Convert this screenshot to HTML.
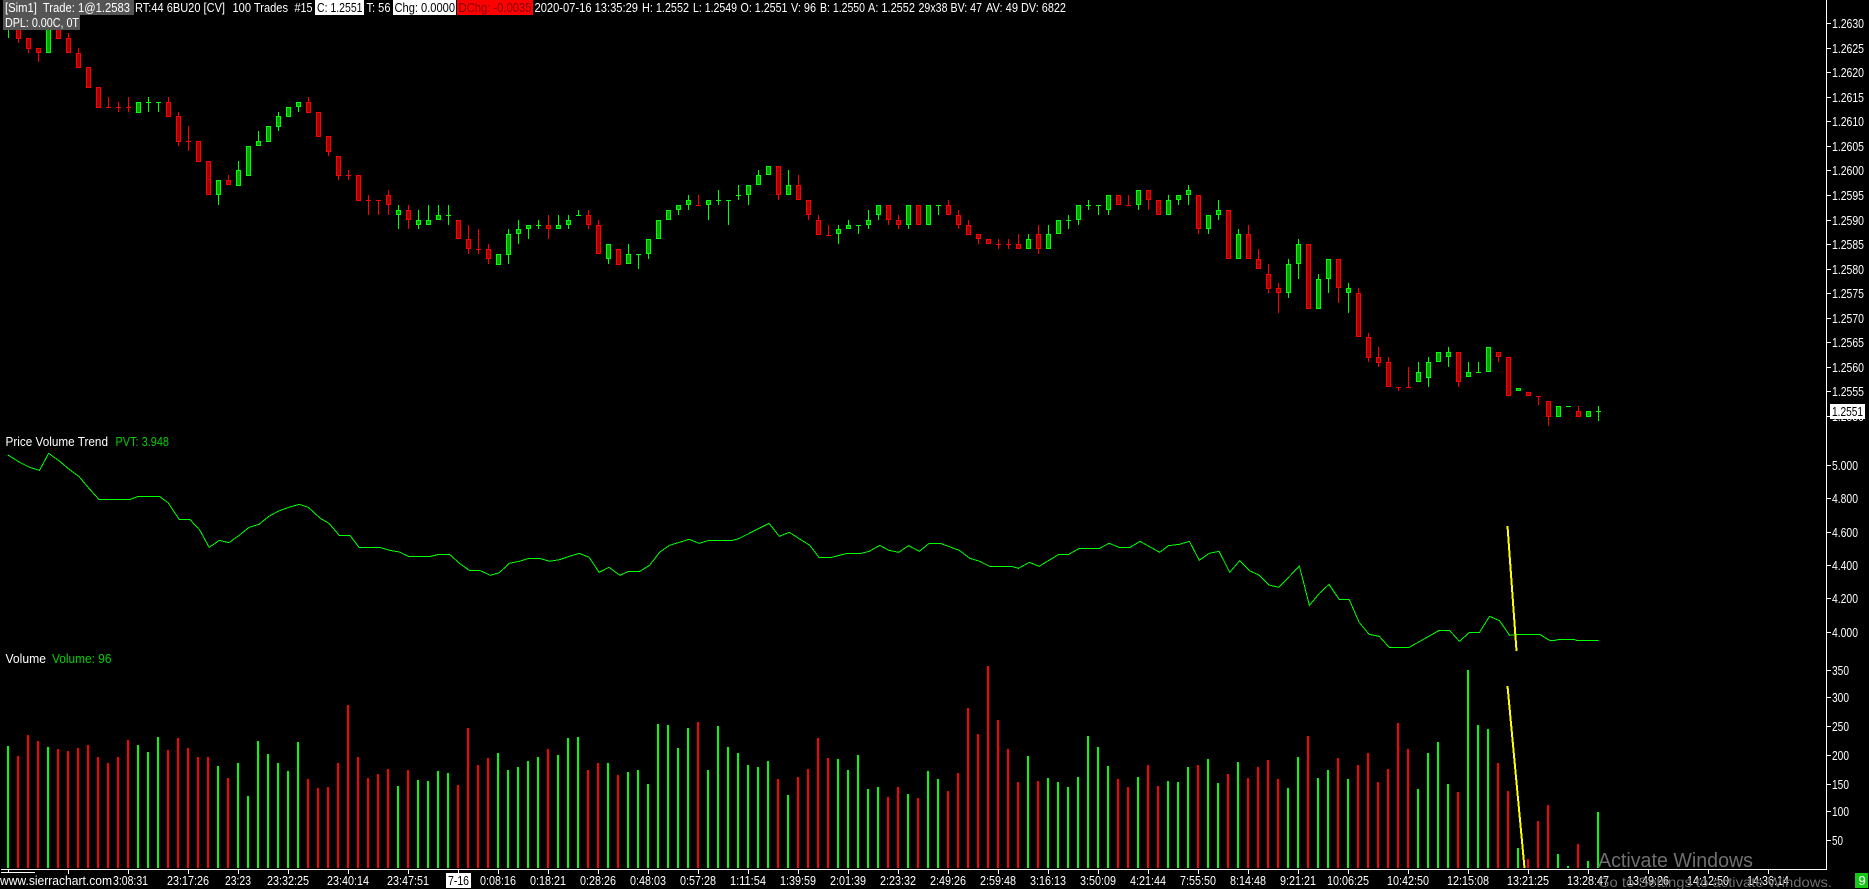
<!DOCTYPE html>
<html><head><meta charset="utf-8"><title>Sierra Chart</title>
<style>
html,body{margin:0;padding:0;background:#000;width:1869px;height:889px;overflow:hidden}
svg{display:block;position:absolute;left:0;top:0}
text{font-family:"Liberation Sans",sans-serif;font-size:13px;fill:#fff}
.g{fill:#00d000}
.b{fill:#000}
</style></head><body>
<svg width="1869" height="889" viewBox="0 0 1869 889" xmlns="http://www.w3.org/2000/svg">
<rect width="1869" height="889" fill="#000"/>

<g shape-rendering="crispEdges" fill="none">
<!-- red wicks & dojis -->
<path stroke="#f00" d="M18.5 28V43M28.5 38V53M38.5 48V62M68.5 33V38M78.5 48V53M108.5 97V108M106 107.5h5M118.5 102V112M116 107.5h5M128.5 97V112M126 107.5h5M168.5 97V102M178.5 112V146M188.5 126V151M186 141.5h5M228.5 175V180M308.5 97V102M328.5 152V156M338.5 176V180M348.5 170V180M346 175.5h5M368.5 195V215M366 200.5h5M378.5 200V215M376 200.5h5M388.5 190V215M408.5 205V229M468.5 225V254M478.5 229V254M476 249.5h5M488.5 244V264M548.5 215V239M588.5 210V229M598.5 220V225M698.5 195V205M696 205.5h5M778.5 195V200M798.5 175V185M808.5 215V220M818.5 215V220M828.5 225V235M826 235.5h5M888.5 220V225M898.5 215V229M948.5 200V205M958.5 210V229M968.5 220V225M978.5 239V244M998.5 239V249M996 244.5h5M1008.5 239V249M1006 244.5h5M1018.5 234V244M1038.5 225V254M1128.5 195V205M1126 205.5h5M1148.5 200V210M1198.5 229V234M1248.5 225V234M1258.5 249V259M1268.5 264V293M1278.5 283V313M1338.5 288V303M1358.5 288V293M1368.5 333V362M1378.5 347V367M1388.5 357V362M1398.5 387V391M1396 387.5h5M1408.5 367V387M1406 387.5h5M1458.5 382V387M1498.5 357V362M1538.5 396V405M1536 396.5h5M1548.5 417V426M1578.5 406V411"/>
<!-- red bodies -->
<path stroke="#f00" fill="#a00000" d="M16.5 28.5h4v10h-4zM26.5 38.5h4v10h-4zM36.5 48.5h4v4h-4zM56.5 28.5h4v10h-4zM66.5 38.5h4v14h-4zM76.5 53.5h4v14h-4zM86.5 67.5h4v20h-4zM96.5 87.5h4v20h-4zM166.5 102.5h4v14h-4zM176.5 116.5h4v25h-4zM196.5 141.5h4v20h-4zM206.5 161.5h4v33h-4zM226.5 180.5h4v4h-4zM306.5 102.5h4v10h-4zM316.5 112.5h4v24h-4zM326.5 136.5h4v15h-4zM336.5 156.5h4v19h-4zM356.5 175.5h4v25h-4zM386.5 195.5h4v9h-4zM406.5 210.5h4v9h-4zM456.5 220.5h4v18h-4zM466.5 239.5h4v9h-4zM486.5 249.5h4v9h-4zM546.5 225.5h4v3h-4zM586.5 215.5h4v9h-4zM596.5 225.5h4v28h-4zM616.5 249.5h4v15h-4zM776.5 166.5h4v28h-4zM796.5 185.5h4v14h-4zM806.5 200.5h4v14h-4zM816.5 220.5h4v14h-4zM886.5 205.5h4v14h-4zM896.5 220.5h4v4h-4zM916.5 205.5h4v19h-4zM946.5 205.5h4v9h-4zM956.5 215.5h4v9h-4zM966.5 225.5h4v9h-4zM976.5 234.5h4v4h-4zM986.5 239.5h4v4h-4zM1016.5 244.5h4v4h-4zM1036.5 234.5h4v14h-4zM1116.5 195.5h4v9h-4zM1146.5 190.5h4v9h-4zM1156.5 200.5h4v14h-4zM1196.5 195.5h4v33h-4zM1226.5 210.5h4v48h-4zM1246.5 234.5h4v24h-4zM1256.5 259.5h4v9h-4zM1266.5 274.5h4v14h-4zM1276.5 288.5h4v4h-4zM1306.5 244.5h4v64h-4zM1336.5 259.5h4v28h-4zM1356.5 293.5h4v43h-4zM1366.5 337.5h4v20h-4zM1376.5 357.5h4v5h-4zM1386.5 362.5h4v24h-4zM1456.5 352.5h4v29h-4zM1496.5 352.5h4v4h-4zM1506.5 357.5h4v38h-4zM1526.5 392.5h4v3h-4zM1546.5 401.5h4v15h-4zM1576.5 411.5h4v5h-4z"/>
<!-- green wicks & dojis -->
<path stroke="#0f0" d="M8.5 30V38M148.5 97V112M146 102.5h5M158.5 102V112M156 102.5h5M218.5 195V205M238.5 161V170M258.5 131V141M278.5 112V116M278.5 127V131M298.5 107V112M398.5 205V229M418.5 210V229M428.5 205V220M438.5 205V215M448.5 205V225M446 215.5h5M508.5 229V264M518.5 220V244M528.5 229V239M538.5 220V229M536 225.5h5M558.5 215V225M568.5 215V229M578.5 210V215M576 215.5h5M608.5 259V264M628.5 244V254M638.5 254V269M636 254.5h5M648.5 254V259M678.5 210V215M688.5 195V210M708.5 205V220M718.5 190V205M716 200.5h5M728.5 200V225M726 200.5h5M738.5 185V200M736 195.5h5M748.5 195V205M758.5 170V175M788.5 170V185M838.5 225V244M848.5 220V225M858.5 225V234M856 225.5h5M868.5 210V229M878.5 215V220M908.5 225V229M938.5 205V215M936 205.5h5M1028.5 234V239M1048.5 225V234M1068.5 215V229M1066 220.5h5M1078.5 220V225M1088.5 200V210M1086 205.5h5M1098.5 205V215M1096 205.5h5M1108.5 210V215M1138.5 205V210M1168.5 195V200M1178.5 200V205M1188.5 185V205M1208.5 229V234M1218.5 200V220M1238.5 229V234M1288.5 259V298M1298.5 239V279M1318.5 274V279M1328.5 279V293M1348.5 283V313M1418.5 362V372M1428.5 357V387M1448.5 347V367M1468.5 362V372M1478.5 362V372M1476 372.5h5M1566 406.5h5M1598.5 406V421M1596 411.5h5"/>
<!-- green bodies -->
<path stroke="#0f0" fill="#00a000" d="M46.5 25.5h4v27h-4zM136.5 102.5h4v10h-4zM216.5 180.5h4v14h-4zM236.5 170.5h4v15h-4zM246.5 146.5h4v29h-4zM256.5 141.5h4v4h-4zM266.5 126.5h4v15h-4zM276.5 116.5h4v10h-4zM286.5 107.5h4v9h-4zM296.5 102.5h4v4h-4zM396.5 210.5h4v4h-4zM416.5 220.5h4v4h-4zM426.5 220.5h4v4h-4zM436.5 215.5h4v4h-4zM496.5 254.5h4v10h-4zM506.5 234.5h4v20h-4zM516.5 229.5h4v4h-4zM526.5 225.5h4v3h-4zM556.5 225.5h4v3h-4zM566.5 220.5h4v4h-4zM606.5 244.5h4v14h-4zM626.5 254.5h4v9h-4zM646.5 239.5h4v14h-4zM656.5 220.5h4v18h-4zM666.5 210.5h4v9h-4zM676.5 205.5h4v4h-4zM686.5 200.5h4v4h-4zM706.5 200.5h4v4h-4zM746.5 185.5h4v9h-4zM756.5 175.5h4v9h-4zM766.5 166.5h4v8h-4zM786.5 185.5h4v9h-4zM836.5 229.5h4v4h-4zM846.5 225.5h4v3h-4zM866.5 220.5h4v4h-4zM876.5 205.5h4v9h-4zM906.5 205.5h4v19h-4zM926.5 205.5h4v19h-4zM1026.5 239.5h4v9h-4zM1046.5 234.5h4v14h-4zM1056.5 220.5h4v13h-4zM1076.5 205.5h4v14h-4zM1106.5 195.5h4v14h-4zM1136.5 190.5h4v14h-4zM1166.5 200.5h4v14h-4zM1176.5 195.5h4v4h-4zM1186.5 190.5h4v4h-4zM1206.5 215.5h4v13h-4zM1216.5 210.5h4v4h-4zM1236.5 234.5h4v24h-4zM1286.5 264.5h4v28h-4zM1296.5 244.5h4v19h-4zM1316.5 279.5h4v29h-4zM1326.5 259.5h4v19h-4zM1346.5 288.5h4v4h-4zM1416.5 372.5h4v9h-4zM1426.5 362.5h4v15h-4zM1436.5 352.5h4v9h-4zM1446.5 352.5h4v4h-4zM1466.5 372.5h4v4h-4zM1486.5 347.5h4v24h-4zM1516.5 388.5h4v2h-4zM1556.5 406.5h4v10h-4zM1586.5 411.5h4v5h-4z"/>

<!-- PVT line -->
<polyline transform="translate(0,430) scale(.39541,.33333)" vector-effect="non-scaling-stroke" stroke="#0f0" stroke-width="1" points="20,75 50,97 75,112 100,121 123,70 150,93 175,118 200,140 225,175 250,208 330,208 350,199 403,199 425,218 453,268 480,268 505,300 529,352 555,331 579,338 605,316 630,292 655,283 680,259 705,243 730,232 757,223 780,232 810,265 832,280 858,316 885,316 908,352 960,352 985,361 1010,366 1033,379 1090,379 1110,373 1137,373 1162,400 1187,421 1213,421 1240,436 1263,428 1288,400 1313,394 1338,385 1365,385 1390,394 1415,389 1440,379 1465,370 1490,382 1515,427 1540,412 1568,436"/>
<polyline transform="translate(620,430) scale(.39541,.33333)" vector-effect="non-scaling-stroke" stroke="#0f0" stroke-width="1" points="0,436 22,424 50,424 75,406 100,367 125,346 150,337 175,328 200,340 225,331 285,331 300,326 377,280 403,319 428,307 480,346 503,382 535,382 575,370 610,370 630,364 657,346 680,361 705,367 730,347 757,364 782,340 810,340 858,361 885,385 910,394 935,409 990,409 1008,415 1035,397 1060,409 1110,373 1135,373 1162,355 1213,355 1237,340 1262,352 1290,352 1315,334 1365,367 1387,347 1415,343 1440,334 1465,391 1490,370 1515,364 1542,427 1568,391"/>
<polyline transform="translate(1240,430) scale(.40115,.33333)" vector-effect="non-scaling-stroke" stroke="#0f0" stroke-width="1" points="0,393 25,423 47,435 72,465 97,472 148,408 173,526 198,490 222,463 247,508 272,508 297,577 322,613 347,619 372,652 422,652 497,601 522,601 547,634 572,607 597,607 622,559 647,572 672,616 697,613 747,613 772,631 785,631 797,628 833,628 838,631 894,631"/>

<!-- volume bars -->
<path stroke="#f00" stroke-width="2" d="M18 756V868M28 735V868M38 741V868M58 749V868M68 751V868M78 748V868M88 745V868M98 757V868M108 763V868M118 757V868M128 740V868M168 750V868M178 738V868M188 748V868M198 757V868M208 757V868M228 778V868M308 779V868M318 788V868M328 787V868M338 763V868M348 705V868M358 757V868M368 778V868M378 774V868M388 769V868M408 770V868M458 785V868M468 728V868M478 765V868M488 758V868M548 749V868M588 770V868M598 763V868M618 775V868M698 722V868M778 779V868M798 777V868M808 769V868M818 738V868M828 758V868M888 797V868M898 787V868M918 798V868M948 791V868M958 773V868M968 708V868M978 734V868M988 666V868M998 720V868M1008 749V868M1018 782V868M1038 781V868M1118 779V868M1128 787V868M1148 765V868M1158 786V868M1198 765V868M1228 774V868M1248 778V868M1258 767V868M1268 760V868M1278 779V868M1308 736V868M1338 758V868M1358 765V868M1368 753V868M1378 782V868M1388 769V868M1398 723V868M1408 749V868M1458 792V868M1498 763V868M1508 791V868M1528 859V868M1538 821V868M1548 805V868M1578 844V868"/>
<path stroke="#0f0" stroke-width="2" d="M8 746V868M48 747V868M138 745V868M148 752V868M158 737V868M218 766V868M238 763V868M248 796V868M258 741V868M268 754V868M278 763V868M288 771V868M298 742V868M398 786V868M418 780V868M428 781V868M438 771V868M448 773V868M498 753V868M508 770V868M518 767V868M528 761V868M538 757V868M558 755V868M568 738V868M578 737V868M608 763V868M628 772V868M638 770V868M648 784V868M658 724V868M668 725V868M678 748V868M688 728V868M708 770V868M718 726V868M728 747V868M738 753V868M748 765V868M758 767V868M768 761V868M788 795V868M838 759V868M848 770V868M858 755V868M868 789V868M878 787V868M908 794V868M928 771V868M938 779V868M1028 756V868M1048 778V868M1058 782V868M1068 787V868M1078 777V868M1088 736V868M1098 747V868M1108 766V868M1138 777V868M1168 781V868M1178 782V868M1188 767V868M1208 759V868M1218 783V868M1238 762V868M1288 788V868M1298 757V868M1318 778V868M1328 770V868M1348 779V868M1418 789V868M1428 753V868M1438 742V868M1448 784V868M1468 670V868M1478 725V868M1488 729V868M1518 848V868M1558 854V868M1568 866V868M1588 861V868M1598 812V868"/>

<!-- yellow drawing lines -->
<path stroke="#ff0" stroke-width="2" d="M1507.5 526L1516.5 651M1507.5 686L1524.5 868"/>

<!-- axes -->
<path stroke="#fff" d="M1826.5 0V869M1 869.5H1827M1 872.5H35M8.5 870V873M68.5 870V874M128.5 870V874M188.5 870V874M238.5 870V874M288.5 870V874M348.5 870V874M408.5 870V874M458.5 870V874M498.5 870V874M548.5 870V874M598.5 870V874M648.5 870V874M698.5 870V874M748.5 870V874M798.5 870V874M848.5 870V874M898.5 870V874M948.5 870V874M998.5 870V874M1048.5 870V874M1098.5 870V874M1148.5 870V874M1198.5 870V874M1248.5 870V874M1298.5 870V874M1348.5 870V874M1408.5 870V874M1468.5 870V874M1528.5 870V874M1588.5 870V874M1648.5 870V874M1708.5 870V874M1768.5 870V874M1827 23.5h4M1827 48.5h4M1827 72.5h4M1827 97.5h4M1827 121.5h4M1827 146.5h4M1827 170.5h4M1827 195.5h4M1827 220.5h4M1827 244.5h4M1827 269.5h4M1827 293.5h4M1827 318.5h4M1827 342.5h4M1827 367.5h4M1827 391.5h4M1827 416.5h4M1827 465.5h4M1827 498.5h4M1827 532.5h4M1827 565.5h4M1827 598.5h4M1827 632.5h4M1827 670.5h4M1827 697.5h4M1827 726.5h4M1827 755.5h4M1827 784.5h4M1827 811.5h4M1827 840.5h4"/>

<!-- header backgrounds -->
<rect x="3" y="0" width="131" height="15" fill="#555"/>
<rect x="3" y="15" width="77" height="15" fill="#555"/>
<rect x="315" y="0" width="49" height="15" fill="#fff"/>
<rect x="393" y="0" width="63" height="15" fill="#fff"/>
<rect x="457" y="0" width="76" height="15" fill="#f00"/>
</g>

<!-- header text -->
<g>
<text x="5" y="12" textLength="125" lengthAdjust="spacingAndGlyphs" xml:space="preserve">[Sim1]  Trade: 1@1.2583</text>
<text x="5" y="27" textLength="74" lengthAdjust="spacingAndGlyphs">DPL: 0.00C, 0T</text>
<text x="135" y="12" textLength="90" lengthAdjust="spacingAndGlyphs">RT:44 6BU20 [CV]</text>
<text x="232.5" y="12" textLength="55.5" lengthAdjust="spacingAndGlyphs">100 Trades</text>
<text x="294.5" y="12" textLength="18" lengthAdjust="spacingAndGlyphs">#15</text>
<text class="b" x="317" y="12" textLength="45.5" lengthAdjust="spacingAndGlyphs">C: 1.2551</text>
<text x="366.5" y="12" textLength="24" lengthAdjust="spacingAndGlyphs">T: 56</text>
<text class="b" x="394.5" y="12" textLength="60.5" lengthAdjust="spacingAndGlyphs">Chg: 0.0000</text>
<text style="fill:#800000" x="458.5" y="12" textLength="73" lengthAdjust="spacingAndGlyphs">DChg: -0.0035</text>
<text x="534.5" y="12" textLength="103.5" lengthAdjust="spacingAndGlyphs">2020-07-16 13:35:29</text>
<text x="642" y="12" textLength="47" lengthAdjust="spacingAndGlyphs">H: 1.2552</text>
<text x="693" y="12" textLength="44" lengthAdjust="spacingAndGlyphs">L: 1.2549</text>
<text x="740.5" y="12" textLength="47" lengthAdjust="spacingAndGlyphs">O: 1.2551</text>
<text x="791" y="12" textLength="25" lengthAdjust="spacingAndGlyphs">V: 96</text>
<text x="820" y="12" textLength="45" lengthAdjust="spacingAndGlyphs">B: 1.2550</text>
<text x="868" y="12" textLength="47" lengthAdjust="spacingAndGlyphs">A: 1.2552</text>
<text x="918.5" y="12" textLength="29" lengthAdjust="spacingAndGlyphs">29x38</text>
<text x="950.5" y="12" textLength="31.5" lengthAdjust="spacingAndGlyphs">BV: 47</text>
<text x="986" y="12" textLength="32" lengthAdjust="spacingAndGlyphs">AV: 49</text>
<text x="1021" y="12" textLength="45" lengthAdjust="spacingAndGlyphs">DV: 6822</text>
</g>

<!-- study labels -->
<text x="5.5" y="446" textLength="102.5" lengthAdjust="spacingAndGlyphs">Price Volume Trend</text>
<text class="g" x="115.5" y="446" textLength="53.5" lengthAdjust="spacingAndGlyphs">PVT: 3.948</text>
<text x="5.5" y="663" textLength="40.5" lengthAdjust="spacingAndGlyphs">Volume</text>
<text class="g" x="52" y="663" textLength="59.5" lengthAdjust="spacingAndGlyphs">Volume: 96</text>

<!-- price scale -->
<text x="1832" y="28" textLength="32" lengthAdjust="spacingAndGlyphs">1.2630</text>
<text x="1832" y="53" textLength="32" lengthAdjust="spacingAndGlyphs">1.2625</text>
<text x="1832" y="77" textLength="32" lengthAdjust="spacingAndGlyphs">1.2620</text>
<text x="1832" y="102" textLength="32" lengthAdjust="spacingAndGlyphs">1.2615</text>
<text x="1832" y="126" textLength="32" lengthAdjust="spacingAndGlyphs">1.2610</text>
<text x="1832" y="151" textLength="32" lengthAdjust="spacingAndGlyphs">1.2605</text>
<text x="1832" y="175" textLength="32" lengthAdjust="spacingAndGlyphs">1.2600</text>
<text x="1832" y="200" textLength="32" lengthAdjust="spacingAndGlyphs">1.2595</text>
<text x="1832" y="225" textLength="32" lengthAdjust="spacingAndGlyphs">1.2590</text>
<text x="1832" y="249" textLength="32" lengthAdjust="spacingAndGlyphs">1.2585</text>
<text x="1832" y="274" textLength="32" lengthAdjust="spacingAndGlyphs">1.2580</text>
<text x="1832" y="298" textLength="32" lengthAdjust="spacingAndGlyphs">1.2575</text>
<text x="1832" y="323" textLength="32" lengthAdjust="spacingAndGlyphs">1.2570</text>
<text x="1832" y="347" textLength="32" lengthAdjust="spacingAndGlyphs">1.2565</text>
<text x="1832" y="372" textLength="32" lengthAdjust="spacingAndGlyphs">1.2560</text>
<text x="1832" y="396" textLength="32" lengthAdjust="spacingAndGlyphs">1.2555</text>
<text x="1832" y="421" textLength="32" lengthAdjust="spacingAndGlyphs">1.2550</text>
<rect x="1830" y="404" width="35" height="15" fill="#fff"/>
<text class="b" x="1832" y="416" textLength="31" lengthAdjust="spacingAndGlyphs">1.2551</text>

<!-- PVT scale -->
<text x="1832" y="470" textLength="26" lengthAdjust="spacingAndGlyphs">5.000</text>
<text x="1832" y="503" textLength="26" lengthAdjust="spacingAndGlyphs">4.800</text>
<text x="1832" y="537" textLength="26" lengthAdjust="spacingAndGlyphs">4.600</text>
<text x="1832" y="570" textLength="26" lengthAdjust="spacingAndGlyphs">4.400</text>
<text x="1832" y="603" textLength="26" lengthAdjust="spacingAndGlyphs">4.200</text>
<text x="1832" y="637" textLength="26" lengthAdjust="spacingAndGlyphs">4.000</text>

<!-- volume scale -->
<text x="1832" y="675" textLength="17" lengthAdjust="spacingAndGlyphs">350</text>
<text x="1832" y="702" textLength="17" lengthAdjust="spacingAndGlyphs">300</text>
<text x="1832" y="731" textLength="17" lengthAdjust="spacingAndGlyphs">250</text>
<text x="1832" y="760" textLength="17" lengthAdjust="spacingAndGlyphs">200</text>
<text x="1832" y="789" textLength="17" lengthAdjust="spacingAndGlyphs">150</text>
<text x="1832" y="816" textLength="17" lengthAdjust="spacingAndGlyphs">100</text>
<text x="1832" y="845" textLength="11" lengthAdjust="spacingAndGlyphs">50</text>

<!-- time axis -->
<text x="0" y="885" textLength="112" lengthAdjust="spacingAndGlyphs">www.sierrachart.com</text>
<text x="113" y="885" textLength="35" lengthAdjust="spacingAndGlyphs">3:08:31</text>
<text x="167" y="885" textLength="42" lengthAdjust="spacingAndGlyphs">23:17:26</text>
<text x="225" y="885" textLength="26" lengthAdjust="spacingAndGlyphs">23:23</text>
<text x="267" y="885" textLength="42" lengthAdjust="spacingAndGlyphs">23:32:25</text>
<text x="327" y="885" textLength="42" lengthAdjust="spacingAndGlyphs">23:40:14</text>
<text x="387" y="885" textLength="42" lengthAdjust="spacingAndGlyphs">23:47:51</text>
<rect x="446" y="873" width="25" height="15" fill="#fff"/>
<text class="b" x="448" y="885" textLength="21" lengthAdjust="spacingAndGlyphs">7-16</text>
<text x="480" y="885" textLength="36" lengthAdjust="spacingAndGlyphs">0:08:16</text>
<text x="530" y="885" textLength="36" lengthAdjust="spacingAndGlyphs">0:18:21</text>
<text x="580" y="885" textLength="36" lengthAdjust="spacingAndGlyphs">0:28:26</text>
<text x="630" y="885" textLength="36" lengthAdjust="spacingAndGlyphs">0:48:03</text>
<text x="680" y="885" textLength="36" lengthAdjust="spacingAndGlyphs">0:57:28</text>
<text x="730" y="885" textLength="36" lengthAdjust="spacingAndGlyphs">1:11:54</text>
<text x="780" y="885" textLength="36" lengthAdjust="spacingAndGlyphs">1:39:59</text>
<text x="830" y="885" textLength="36" lengthAdjust="spacingAndGlyphs">2:01:39</text>
<text x="880" y="885" textLength="36" lengthAdjust="spacingAndGlyphs">2:23:32</text>
<text x="930" y="885" textLength="36" lengthAdjust="spacingAndGlyphs">2:49:26</text>
<text x="980" y="885" textLength="36" lengthAdjust="spacingAndGlyphs">2:59:48</text>
<text x="1030" y="885" textLength="36" lengthAdjust="spacingAndGlyphs">3:16:13</text>
<text x="1080" y="885" textLength="36" lengthAdjust="spacingAndGlyphs">3:50:09</text>
<text x="1130" y="885" textLength="36" lengthAdjust="spacingAndGlyphs">4:21:44</text>
<text x="1180" y="885" textLength="36" lengthAdjust="spacingAndGlyphs">7:55:50</text>
<text x="1230" y="885" textLength="36" lengthAdjust="spacingAndGlyphs">8:14:48</text>
<text x="1280" y="885" textLength="36" lengthAdjust="spacingAndGlyphs">9:21:21</text>
<text x="1327" y="885" textLength="42" lengthAdjust="spacingAndGlyphs">10:06:25</text>
<text x="1387" y="885" textLength="42" lengthAdjust="spacingAndGlyphs">10:42:50</text>
<text x="1447" y="885" textLength="42" lengthAdjust="spacingAndGlyphs">12:15:08</text>
<text x="1507" y="885" textLength="42" lengthAdjust="spacingAndGlyphs">13:21:25</text>
<text x="1567" y="885" textLength="42" lengthAdjust="spacingAndGlyphs">13:28:47</text>
<text x="1627" y="885" textLength="42" lengthAdjust="spacingAndGlyphs">13:49:26</text>
<text x="1687" y="885" textLength="42" lengthAdjust="spacingAndGlyphs">14:12:50</text>
<text x="1747" y="885" textLength="42" lengthAdjust="spacingAndGlyphs">14:36:14</text>

<!-- activation watermark -->
<text x="1598" y="867" textLength="155" lengthAdjust="spacingAndGlyphs" style="font-size:20px;fill:#6f6f6f">Activate Windows</text>
<text x="1598" y="887" textLength="234" lengthAdjust="spacingAndGlyphs" style="font-size:14px;fill:#6f6f6f">Go to Settings to activate Windows.</text>

<!-- status box -->
<rect x="1855" y="873" width="13" height="15" fill="#16c816"/>
<text x="1858.5" y="885">9</text>
</svg>
</body></html>
